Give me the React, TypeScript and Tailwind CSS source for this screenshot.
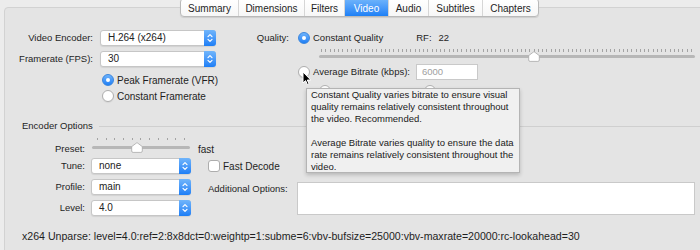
import React from 'react';

const font = { fontFamily: '"Liberation Sans", Arial, sans-serif' };

const tabs = [
  { name: 'Summary', w: 'w-[57px]' },
  { name: 'Dimensions', w: 'w-[66px]' },
  { name: 'Filters', w: 'w-[40px]' },
  { name: 'Video', w: 'w-[44px]' },
  { name: 'Audio', w: 'w-[40px]' },
  { name: 'Subtitles', w: 'w-[54px]' },
  { name: 'Chapters', w: 'w-[56px]' },
];

const Chevrons = () => (
  <svg width="6" height="10" viewBox="0 0 6 10" fill="none" stroke="white" strokeWidth="1.2" strokeLinecap="round" strokeLinejoin="round">
    <path d="M1 3.6 L3 1.6 L5 3.6" />
    <path d="M1 6.4 L3 8.4 L5 6.4" />
  </svg>
);

const Popup = ({ value, w }: { value: string; w: string }) => (
  <div className={`${w} h-[16px] flex bg-white rounded-[3px] border border-[#c6c6c6] shadow-[0_1px_1px_rgba(0,0,0,0.08)]`}>
    <span className="flex-1 pl-[7px] text-[10px] leading-[14px] text-[#222]">{value}</span>
    <span className="w-[12px] -my-px -mr-px rounded-r-[3px] bg-gradient-to-b from-[#70b5fb] to-[#1b7ef6] flex items-center justify-center">
      <Chevrons />
    </span>
  </div>
);

const Radio = ({ on }: { on?: boolean }) =>
  on ? (
    <span className="w-[12px] h-[12px] shrink-0 rounded-full bg-gradient-to-b from-[#6cb2fb] to-[#1c7ff5] border border-[#3a86de] flex items-center justify-center">
      <span className="w-[4px] h-[4px] rounded-full bg-white" />
    </span>
  ) : (
    <span className="w-[12px] h-[12px] shrink-0 rounded-full bg-white border border-[#aeaeae] shadow-[0_1px_1px_rgba(0,0,0,0.06)]" />
  );

const Knob = () => (
  <svg width="12" height="11" viewBox="0 0 12 11">
    <path d="M6 0.6 L11.3 4.6 L11.3 9 Q11.3 10.4 9.9 10.4 L2.1 10.4 Q0.7 10.4 0.7 9 L0.7 4.6 Z" fill="white" stroke="#a8a8a8" strokeWidth="0.8" />
  </svg>
);

const Cursor = () => (
  <svg width="10" height="15" viewBox="0 0 10 15">
    <path d="M1 1 L1 12 L3.6 9.6 L5.4 13.6 L7 12.9 L5.3 9 L8.8 9 Z" fill="black" stroke="white" strokeWidth="1" strokeLinejoin="round" />
  </svg>
);

const qualityTicks = Array.from({ length: 88 });
const presetTicks = Array.from({ length: 11 });

export default function App() {
  return (
    <div className="w-[700px] h-[250px] overflow-hidden bg-[#ececec] relative text-[#1e1e1e] whitespace-nowrap" style={font}>
      {/* tabs */}
      <div className="relative z-10 h-[17px] pl-[180px] flex items-end">
        <div className="h-[19px] flex bg-gradient-to-b from-white to-[#f7f7f7] border border-[#b9b9b9] rounded-[4px] shadow-[0_1px_1px_rgba(0,0,0,0.1)] overflow-hidden">
          {tabs.map((t, i) => (
            <div
              key={t.name}
              className={`${t.w} flex items-center justify-center text-[10px] ${
                t.name === 'Video'
                  ? 'bg-gradient-to-b from-[#6fb4fb] to-[#1b80f6] text-white'
                  : 'text-[#1e1e1e]'
              } ${i > 0 ? 'border-l border-[#d6d6d6]' : ''}`}
            >
              <span className="pt-[2px]">{t.name}</span>
            </div>
          ))}
        </div>
      </div>

      {/* panel */}
      <div className="-mt-[10px] ml-[4px] w-[710px] h-[270px] bg-[#e4e4e4] border border-[#d2d2d2] rounded-[4px] pt-[22px] text-[9.5px]">
        {/* top section */}
        <div className="flex">
          {/* left block */}
          <div className="w-[212px]">
            <div className="flex items-center h-[16px]">
              <span className="w-[88px] text-right">Video Encoder:</span>
              <div className="ml-[7px]">
                <Popup value="H.264 (x264)" w="w-[116px]" />
              </div>
            </div>
            <div className="flex items-center h-[16px] mt-[5px]">
              <span className="w-[88px] text-right">Framerate (FPS):</span>
              <div className="ml-[7px]">
                <Popup value="30" w="w-[116px]" />
              </div>
            </div>
            <div className="pl-[97px] mt-[7px] flex flex-col gap-[4px] text-[10px]">
              <div className="flex items-center gap-[3px] h-[12px]">
                <Radio on />
                <span>Peak Framerate (VFR)</span>
              </div>
              <div className="flex items-center gap-[3px] h-[12px]">
                <Radio />
                <span>Constant Framerate</span>
              </div>
            </div>
          </div>

          {/* right block */}
          <div className="ml-[24px] relative">
            <div className="flex items-center h-[16px]">
              <span className="w-[48px] text-right">Quality:</span>
              <div className="ml-[9px] flex items-center gap-[3px]">
                <Radio on />
                <span>Constant Quality</span>
              </div>
              <span className="ml-[33px]">RF:</span>
              <span className="ml-[7px]">22</span>
            </div>
            {/* quality slider */}
            <div className="ml-[78px] w-[376px] h-[12px] mt-[3px] relative">
              <div className="flex justify-between px-[2px]">
                {qualityTicks.map((_, i) => (
                  <span key={i} className="w-px h-[3px] bg-[#a3a3a3]" />
                ))}
              </div>
              <div className="absolute left-0 right-0 top-[6px] h-[3px] rounded-full bg-[#b7b7b7]" />
              <div className="absolute left-[209px] top-[2px]">
                <Knob />
              </div>
            </div>
            <div className="flex items-center h-[16px] mt-[3px]">
              <div className="ml-[57px] flex items-center gap-[3px]">
                <Radio />
                <span>Average Bitrate (kbps):</span>
              </div>
              <div className="ml-[6px] w-[62px] h-[16px] bg-white border border-[#c9c9c9] text-[#a0a0a0] pl-[5px] leading-[14px]">
                6000
              </div>
            </div>
            {/* items hidden under tooltip */}
            <div className="flex items-center h-[12px] mt-[5px]">
              <span className="ml-[78px] w-[12px] h-[12px] rounded-full bg-white border border-[#b0b0b0]" />
              <span className="ml-[93px] w-[12px] h-[12px] rounded-full bg-white border border-[#b0b0b0]" />
            </div>
          </div>
        </div>

        {/* encoder options */}
        <div className="mt-[17px] flex items-center h-[14px] pl-[17px]">
          <span>Encoder Options</span>
          <span className="ml-[6px] flex-1 h-px bg-[#cfcfcf]" />
        </div>
        <div className="flex mt-[4px]">
          <div className="w-[186px] shrink-0">
            <div className="flex h-[21px]">
              <span className="w-[80px] shrink-0 text-right pt-[5px]">Preset:</span>
              <div className="ml-[7px] w-[98px] shrink-0 relative">
                <div className="flex justify-between px-[5px] pt-[1px]">
                  {presetTicks.map((_, i) => (
                    <span key={i} className="w-px h-[2px] bg-[#a3a3a3]" />
                  ))}
                </div>
                <div className="absolute left-0 right-0 top-[9px] h-[3px] rounded-full bg-[#b7b7b7]" />
                <div className="absolute left-[39px] top-[5px]">
                  <Knob />
                </div>
              </div>
              <span className="ml-[8px] pt-[5px] text-[10px]">fast</span>
            </div>
            <div className="flex items-center h-[16px]">
              <span className="w-[80px] text-right">Tune:</span>
              <div className="ml-[6px]">
                <Popup value="none" w="w-[100px]" />
              </div>
            </div>
            <div className="flex items-center h-[16px] mt-[5px]">
              <span className="w-[80px] text-right">Profile:</span>
              <div className="ml-[6px]">
                <Popup value="main" w="w-[100px]" />
              </div>
            </div>
            <div className="flex items-center h-[16px] mt-[5px]">
              <span className="w-[80px] text-right">Level:</span>
              <div className="ml-[6px]">
                <Popup value="4.0" w="w-[100px]" />
              </div>
            </div>
          </div>
          <div className="ml-[17px] pt-[21px]">
            <div className="flex items-center h-[16px] gap-[3px] text-[10px]">
              <span className="w-[12px] h-[12px] rounded-[3px] bg-white border border-[#adadad]" />
              <span>Fast Decode</span>
            </div>
            <div className="flex items-start mt-[8px]">
              <span className="w-[82px] leading-[11px] pt-[1px]">Additional Options:</span>
              <div className="ml-[7px] w-[398px] h-[33px] bg-white border border-[#c9c9c9]" />
            </div>
          </div>
        </div>
        <div className="mt-[13px] pl-[17px] h-[14px] leading-[14px] text-[10.6px]">
          x264 Unparse: level=4.0:ref=2:8x8dct=0:weightp=1:subme=6:vbv-bufsize=25000:vbv-maxrate=20000:rc-lookahead=30
        </div>
      </div>

      {/* tooltip */}
      <div className="absolute left-[306px] top-[88px] w-[214px] h-[85px] bg-[#f0f0f0] border border-[#b4b4b4] shadow-[0_2px_4px_rgba(0,0,0,0.2)] px-[4px] text-[9.5px] leading-[12px] text-[#1a1a1a]">
        <div>Constant Quality varies bitrate to ensure visual</div>
        <div>quality remains relatively consistent throughout</div>
        <div>the video. Recommended.</div>
        <div className="h-[12px]" />
        <div>Average Bitrate varies quality to ensure the data</div>
        <div>rate remains relatively consistent throughout the</div>
        <div>video.</div>
      </div>

      {/* mouse pointer */}
      <div className="absolute left-[302px] top-[71px]">
        <Cursor />
      </div>
    </div>
  );
}
